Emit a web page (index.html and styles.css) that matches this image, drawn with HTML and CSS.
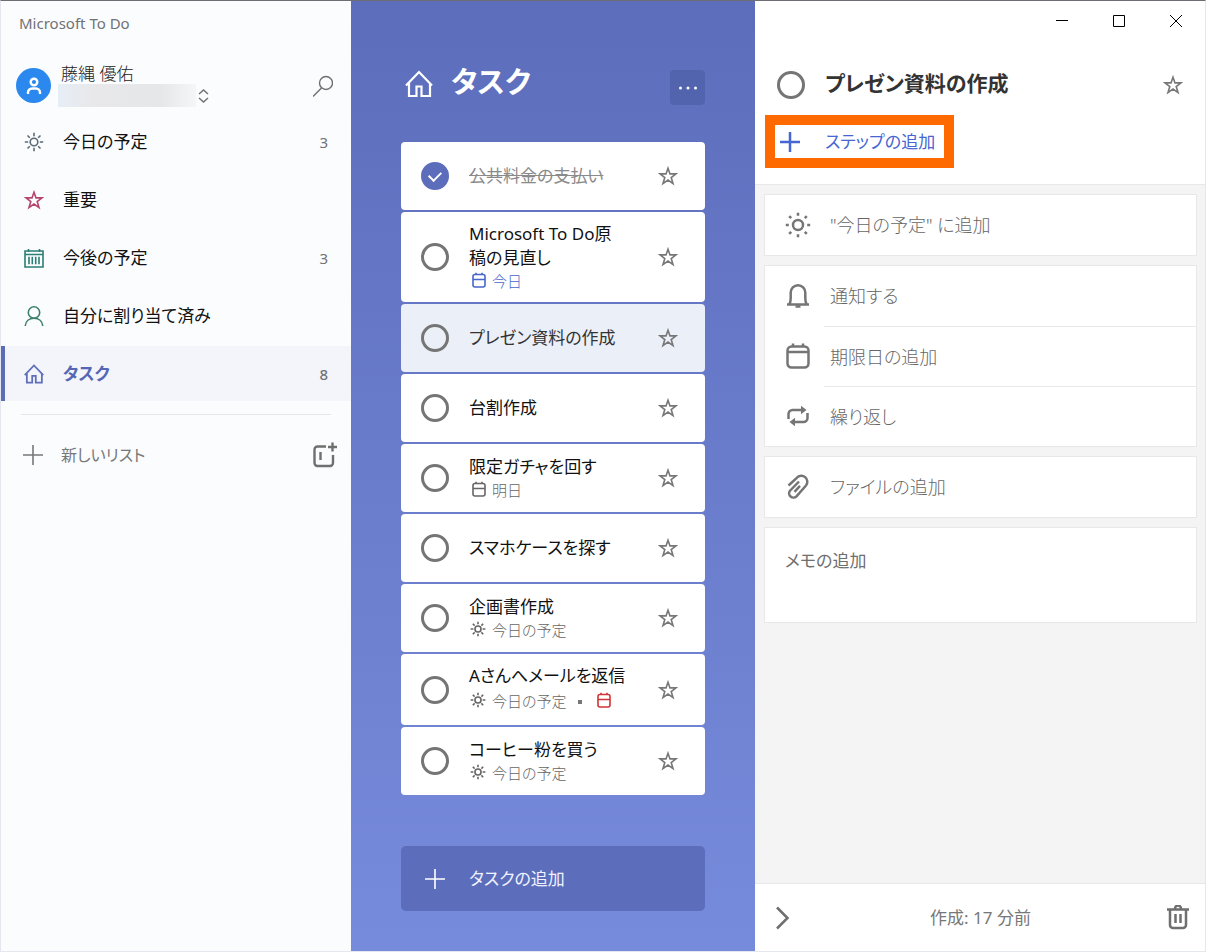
FILE: index.html
```html
<!DOCTYPE html>
<html lang="ja">
<head>
  <meta charset="UTF-8">
  <meta name="viewport" content="width=device-width, initial-scale=1">
  <title>Microsoft To Do</title>
  <link rel="stylesheet" href="styles.css">
</head>
<body>

  <!-- アイコン -->
  <svg class="sprite" aria-hidden="true">
    <symbol id="i-star" viewBox="0 0 20 20"><path d="M10 2.2l2 5.7h6l-4.8 3.7 1.8 6-5-3.600-5 3.600 1.800-6-4.800-3.700h6z"/></symbol>
    <symbol id="i-sun" viewBox="0 0 20 20"><circle cx="10" cy="10" r="3.8"/><path d="M10 .8v3.400M10 15.800v3.400M.8 10h3.400M15.800 10h3.400M3.500 3.500l2.300 2.300M14.200 14.200l2.300 2.300M3.500 16.500l2.300-2.300M14.200 5.800l2.300-2.300"/></symbol>
    <symbol id="i-sun-bold" viewBox="0 0 26 26"><circle cx="13" cy="13" r="5"/><path d="M13 .8v3M13 22.2v3M.8 13h3M22.2 13h3M4.2 4.2l2 2M19.8 19.8l2 2M4.2 21.8l2-2M19.8 6.2l2-2"/></symbol>
    <symbol id="i-home" viewBox="0 0 28 28"><path d="M1 15.5L14 2l13 13.5M4 12.8V26h7.5v-9.5h5V26H25V12.8"/></symbol>
    <symbol id="i-month" viewBox="0 0 20 20"><path d="M1 3h18v16H1zM1 6.5h18M4.5 1v3M15.5 1v3M5 8.8v7.4M8.3 8.8v7.4M11.7 8.8v7.4M15 8.8v7.4"/></symbol>
    <symbol id="i-user" viewBox="0 0 20 20"><circle cx="10" cy="6.5" r="5.7"/><path d="M1.2 20c.4-4.800 4-7.800 8.800-7.800s8.400 3 8.800 7.800"/></symbol>
    <symbol id="i-plus" viewBox="0 0 20 20"><path d="M10 0v20M0 10h20"/></symbol>
    <symbol id="i-date" viewBox="0 0 14 16"><rect x="1" y="2.5" width="12" height="12.5" rx="2"/><path d="M1 7.5h12M4 .8v2M10 .8v2"/></symbol>
    <symbol id="i-calendar" viewBox="0 0 24 26"><rect x="1.5" y="3.5" width="21" height="21" rx="4"/><path d="M1.5 9h21M7 .5v3M17 .5v3"/></symbol>
    <symbol id="i-bell" viewBox="0 0 24 26"><path d="M1 21.500h22M3.500 21c1-2 1.200-3.500 1.200-6V9.500a7.300 7.300 0 0 1 14.600 0V15c0 2.500.2 4 1.200 6"/><path d="M9.500 23.500h5"/></symbol>
    <symbol id="i-repeat" viewBox="0 0 22 22"><path d="M1.500 14V9a4 4 0 0 1 4-4H17M20.500 8v5a4 4 0 0 1-4 4H5"/><path class="solid" d="M14 .8L19.500 5 14 9.200zM8 12.800L2.500 17 8 21.200z"/></symbol>
    <symbol id="i-clip" viewBox="0 0 24 26"><path d="M2.500 11.500L10.800 3.800a6 6 0 0 1 9.200 7.700L10.500 22.300a4.300 4.300 0 0 1-6.500-5.600L13 7.500"/><path d="M8.500 17.800l5.500-6"/></symbol>
  </svg>

  <div class="window">

    <nav class="sidebar" aria-label="リスト">
      <div class="app-name">Microsoft To Do</div>

      <div class="profile">
        <span class="avatar">
          <svg width="16" height="18" viewBox="0 0 16 18"><circle cx="8" cy="5" r="3.3"/><path d="M2 17v-1.500a4 4 0 0 1 4-4h4a4 4 0 0 1 4 4V17"/></svg>
        </span>
        <div class="account">
          <div class="account-name">藤縄 優佑</div>
          <div class="account-row">
            <span class="account-mail"></span>
            <button class="icon-btn" aria-label="アカウントの管理">
              <svg width="11" height="14" viewBox="0 0 11 14"><path d="M1 5l4.500-4L10 5M1 9l4.500 4L10 9"/></svg>
            </button>
          </div>
        </div>
        <button class="icon-btn search" aria-label="検索">
          <svg width="20" height="22" viewBox="0 0 20 22"><circle cx="13" cy="8" r="6.5"/><path d="M8.500 13L0 21.500"/></svg>
        </button>
      </div>

      <ul class="lists">
        <li><a class="list" href="#"><svg class="ico c-slate"><use href="#i-sun"/></svg><span class="list-name">今日の予定</span><span class="count">3</span></a></li>
        <li><a class="list" href="#"><svg class="ico c-rose"><use href="#i-star"/></svg><span class="list-name">重要</span></a></li>
        <li><a class="list" href="#"><svg class="ico c-teal"><use href="#i-month"/></svg><span class="list-name">今後の予定</span><span class="count">3</span></a></li>
        <li><a class="list" href="#"><svg class="ico c-green"><use href="#i-user"/></svg><span class="list-name">自分に割り当て済み</span></a></li>
        <li><a class="list active" href="#" aria-current="page"><svg class="ico c-blue home"><use href="#i-home"/></svg><span class="list-name">タスク</span><span class="count">8</span></a></li>
      </ul>

      <div class="new-list">
        <button class="new-list-btn"><svg class="ico"><use href="#i-plus"/></svg>新しいリスト</button>
        <button class="icon-btn group" aria-label="新しいグループ">
          <svg width="26" height="26" viewBox="0 0 26 26"><path d="M14 4.500H5.500a3 3 0 0 0-3 3V21a3 3 0 0 0 3 3H18a3 3 0 0 0 3-3v-8M8.500 10v8M16 5h9M20.500 .5v9"/></svg>
        </button>
      </div>
    </nav>

    <main class="board">
      <header class="board-head">
        <svg class="board-icon"><use href="#i-home"/></svg>
        <h1>タスク</h1>
        <button class="more" aria-label="リストのオプション">
          <svg width="20" height="4" viewBox="0 0 20 4"><circle cx="2.5" cy="2" r="1.5"/><circle cx="10" cy="2" r="1.5"/><circle cx="17.5" cy="2" r="1.5"/></svg>
        </button>
      </header>

      <ul class="tasks">
        <li class="task done">
          <input type="checkbox" class="check" id="t1" checked>
          <div class="task-body"><label for="t1">公共料金の支払い</label></div>
          <button class="star" aria-label="重要としてマーク"><svg class="ico"><use href="#i-star"/></svg></button>
        </li>
        <li class="task">
          <input type="checkbox" class="check" id="t2">
          <div class="task-body">
            <label for="t2">Microsoft To Do原稿の見直し</label>
            <div class="meta today"><svg class="date"><use href="#i-date"/></svg>今日</div>
          </div>
          <button class="star" aria-label="重要としてマーク"><svg class="ico"><use href="#i-star"/></svg></button>
        </li>
        <li class="task selected">
          <input type="checkbox" class="check" id="t3">
          <div class="task-body"><label for="t3">プレゼン資料の作成</label></div>
          <button class="star" aria-label="重要としてマーク"><svg class="ico"><use href="#i-star"/></svg></button>
        </li>
        <li class="task">
          <input type="checkbox" class="check" id="t4">
          <div class="task-body"><label for="t4">台割作成</label></div>
          <button class="star" aria-label="重要としてマーク"><svg class="ico"><use href="#i-star"/></svg></button>
        </li>
        <li class="task">
          <input type="checkbox" class="check" id="t5">
          <div class="task-body">
            <label for="t5">限定ガチャを回す</label>
            <div class="meta"><svg class="date"><use href="#i-date"/></svg>明日</div>
          </div>
          <button class="star" aria-label="重要としてマーク"><svg class="ico"><use href="#i-star"/></svg></button>
        </li>
        <li class="task">
          <input type="checkbox" class="check" id="t6">
          <div class="task-body"><label for="t6">スマホケースを探す</label></div>
          <button class="star" aria-label="重要としてマーク"><svg class="ico"><use href="#i-star"/></svg></button>
        </li>
        <li class="task">
          <input type="checkbox" class="check" id="t7">
          <div class="task-body">
            <label for="t7">企画書作成</label>
            <div class="meta"><svg class="sun"><use href="#i-sun"/></svg>今日の予定</div>
          </div>
          <button class="star" aria-label="重要としてマーク"><svg class="ico"><use href="#i-star"/></svg></button>
        </li>
        <li class="task">
          <input type="checkbox" class="check" id="t8">
          <div class="task-body">
            <label for="t8">Aさんへメールを返信</label>
            <div class="meta tall"><svg class="sun"><use href="#i-sun"/></svg>今日の予定<span class="dot"></span><svg class="date overdue"><use href="#i-date"/></svg></div>
          </div>
          <button class="star" aria-label="重要としてマーク"><svg class="ico"><use href="#i-star"/></svg></button>
        </li>
        <li class="task">
          <input type="checkbox" class="check" id="t9">
          <div class="task-body">
            <label for="t9">コーヒー粉を買う</label>
            <div class="meta"><svg class="sun"><use href="#i-sun"/></svg>今日の予定</div>
          </div>
          <button class="star" aria-label="重要としてマーク"><svg class="ico"><use href="#i-star"/></svg></button>
        </li>
      </ul>

      <label class="add-task">
        <svg class="ico"><use href="#i-plus"/></svg>
        <input type="text" placeholder="タスクの追加" aria-label="タスクの追加">
      </label>
    </main>

    <aside class="detail">
      <div class="detail-top">
        <div class="caption">
          <button aria-label="最小化"><svg width="12" height="12" viewBox="0 0 12 12"><path d="M0 5.500h12"/></svg></button>
          <button aria-label="最大化"><svg width="12" height="12" viewBox="0 0 12 12"><path d="M.5 .5h11v11H.5z"/></svg></button>
          <button aria-label="閉じる"><svg width="12" height="12" viewBox="0 0 12 12"><path d="M0 0l12 12M12 0L0 12"/></svg></button>
        </div>
        <div class="detail-head">
          <input type="checkbox" class="check" id="current">
          <h2><label for="current">プレゼン資料の作成</label></h2>
          <button class="star" aria-label="重要としてマーク"><svg class="ico"><use href="#i-star"/></svg></button>
        </div>
        <button class="add-step"><svg class="ico"><use href="#i-plus"/></svg>ステップの追加</button>
      </div>

      <div class="cards">
        <div class="card">
          <button class="option"><svg class="opt-ico"><use href="#i-sun-bold"/></svg><span>"今日の予定" に追加</span></button>
        </div>
        <div class="card">
          <button class="option"><svg class="opt-ico"><use href="#i-bell"/></svg><span>通知する</span></button>
          <button class="option"><svg class="opt-ico"><use href="#i-calendar"/></svg><span>期限日の追加</span></button>
          <button class="option"><svg class="opt-ico small"><use href="#i-repeat"/></svg><span>繰り返し</span></button>
        </div>
        <div class="card">
          <button class="option"><svg class="opt-ico"><use href="#i-clip"/></svg><span>ファイルの追加</span></button>
        </div>
        <textarea class="card memo" placeholder="メモの追加" aria-label="メモの追加"></textarea>
      </div>

      <footer class="detail-foot">
        <button class="icon-btn" aria-label="詳細を閉じる">
          <svg width="24" height="24" viewBox="0 0 24 24"><path d="M6 1.500l10.500 10.500L6 22.500"/></svg>
        </button>
        <span>作成: 17 分前</span>
        <button class="icon-btn" aria-label="タスクの削除">
          <svg width="24" height="26" viewBox="0 0 24 26"><path d="M1 4.500h22M9 3.500a3 3 0 0 1 6 0M4 4.500V20a3 3 0 0 0 3 3h10a3 3 0 0 0 3-3V4.500M9.500 9v9M14.500 9v9"/></svg>
        </button>
      </footer>
    </aside>

  </div>
</body>
</html>
```

FILE: styles.css
```css
* {
  box-sizing: border-box;
}

body {
  margin: 0;
  font-family: "Noto Sans", "Noto Sans CJK JP", sans-serif;
  font-feature-settings: "palt";
  font-size: 17px;
  line-height: 24px;
  color: #111;
}

h1, h2, ul {
  margin: 0;
  padding: 0;
}

ul {
  list-style: none;
}

a {
  color: inherit;
  text-decoration: none;
}

button, input, textarea {
  font: inherit;
  font-feature-settings: inherit;
  color: inherit;
  margin: 0;
  padding: 0;
  border: none;
  background: none;
}

button {
  cursor: pointer;
}

svg {
  display: block;
  flex: none;
  fill: none;
  stroke: currentColor;
}

.solid {
  fill: currentColor;
  stroke: none;
}

.sprite {
  position: absolute;
  width: 0;
  height: 0;
}

.ico {
  width: 20px;
  height: 20px;
  stroke-width: 1.6;
}

.icon-btn {
  flex: none;
  color: #6f6f6f;
}

.window {
  display: flex;
  min-height: 100vh;
  border: 1px solid #e4e7ee;
  border-top-color: #6d6e74;
}

/* ---- サイドバー ---- */
.sidebar {
  flex: 0 0 350px;
  background: #fbfcfe;
}

.app-name {
  padding: 10px 18px 0;
  font-size: 15px;
  color: #707275;
}

.profile {
  display: flex;
  align-items: center;
  height: 79px;
  padding: 22px 16px 0 15px;
}

.avatar {
  display: flex;
  align-items: center;
  justify-content: center;
  width: 35px;
  height: 35px;
  border-radius: 50%;
  background: #2b88ee;
  color: #fff;
}

.avatar svg {
  stroke-width: 2.4;
}

.account {
  flex: 1;
  margin-left: 7px;
}

.account-name {
  padding: 0 3px;
  line-height: 20px;
  font-weight: 300;
  color: #222;
}

.account-row {
  display: flex;
  align-items: center;
  gap: 2px;
}

.account-row svg {
  stroke-width: 1.4;
}

.account-mail {
  width: 138px;
  height: 23px;
  background: linear-gradient(90deg, #e6eef6, #e8e8ea 25%, #e6e7e9 75%, #f5f6f8);
}

.search {
  margin-right: 2px;
}

.search svg {
  stroke-width: 1.4;
}

.list {
  display: flex;
  align-items: center;
  height: 55px;
  margin-bottom: 3px;
  padding: 0 23px 0 19px;
  border-left: 4px solid transparent;
}

.list-name {
  flex: 1;
  padding-left: 19px;
}

.count {
  font-size: 15px;
  color: #707275;
}

.active {
  border-left-color: #5c6db8;
  background: #f3f5fa;
}

.active .list-name {
  font-weight: 700;
  color: #5566b5;
}

.active .count {
  font-weight: 500;
}

.home {
  stroke-width: 2.5;
}

.c-slate { color: #5c6b75; }
.c-rose { color: #b8446c; }
.c-teal { color: #2b7d75; }
.c-green { color: #3c8068; }
.c-blue { color: #5f6fbc; }

.new-list {
  display: flex;
  align-items: center;
  justify-content: space-between;
  margin: 13px 20px 0;
  padding-top: 27px;
  border-top: 1px solid #e3e6eb;
  font-size: 16px;
  color: #777;
}

.new-list-btn {
  display: flex;
  align-items: center;
  gap: 18px;
  padding-left: 2px;
}

.group {
  margin-right: -7px;
}

.group svg {
  stroke-width: 2.4;
}

/* ---- タスク一覧 ---- */
.board {
  flex: 1;
  display: flex;
  flex-direction: column;
  min-width: 300px;
  padding: 69px 50px 40px;
  background: linear-gradient(#5c6dbb, #778bdc);
}

.board-head {
  display: flex;
  height: 72px;
  color: #fff;
}

.board-icon {
  width: 28px;
  height: 28px;
  margin-left: 4px;
  stroke-width: 2.2;
}

.board-head h1 {
  flex: 1;
  padding-left: 18px;
  font-size: 29px;
  line-height: 24px;
}

.more {
  display: flex;
  align-items: center;
  justify-content: center;
  width: 35px;
  height: 35px;
  border-radius: 4px;
  background: #5364ae;
}

.more svg {
  fill: #fff;
  stroke: none;
}

.tasks {
  flex: 1;
}

.task {
  display: flex;
  align-items: center;
  min-height: 68px;
  margin-bottom: 2px;
  padding: 10px 13px 10px 20px;
  border-radius: 4px;
  background: #fff;
}

.task-body {
  flex: 1;
  padding: 0 17px 0 20px;
}

.selected {
  background: #ebeff7;
}

.selected label {
  color: #333;
}

.done label {
  color: #8a8a8a;
  text-decoration: line-through;
}

.check {
  appearance: none;
  display: flex;
  align-items: center;
  justify-content: center;
  flex: none;
  width: 28px;
  height: 28px;
  border: 3px solid #757575;
  border-radius: 50%;
}

.check:checked {
  border-color: #5c6dbb;
  background: #5c6dbb;
}

.check:checked::after {
  content: "";
  width: 6px;
  height: 10px;
  margin-bottom: 3px;
  border: solid #fff;
  border-width: 0 2px 2px 0;
  transform: rotate(45deg);
}

.star {
  display: flex;
  justify-content: center;
  width: 48px;
  color: #777;
}

.meta {
  display: flex;
  align-items: center;
  font-size: 15px;
  line-height: 22px;
  font-weight: 300;
  color: #666;
}

.tall {
  line-height: 27px;
}

.today {
  color: #4666cc;
}

.date {
  width: 14px;
  height: 16px;
  margin: 0 6px 3px 3px;
  stroke-width: 1.6;
}

.sun {
  width: 16px;
  height: 16px;
  margin: 0 6px 3px 1px;
  stroke-width: 2;
}

.dot {
  width: 4px;
  height: 4px;
  margin: 0 12px;
  background: #777;
}

.overdue {
  color: #d13438;
}

.add-task {
  display: flex;
  align-items: center;
  height: 65px;
  padding: 0 24px;
  border-radius: 5px;
  background: #5c6dbb;
  color: #fff;
}

.add-task input {
  flex: 1;
  min-width: 0;
  padding-left: 24px;
}

.add-task input::placeholder {
  color: #f0f3ff;
}

/* ---- 詳細 ---- */
.detail {
  flex: 0 0 450px;
  display: flex;
  flex-direction: column;
  background: #f4f4f4;
}

.detail-top {
  height: 184px;
  border-bottom: 1px solid #e8e8e8;
  background: #fff;
}

.caption {
  display: flex;
  justify-content: flex-end;
  padding-right: 1px;
}

.caption button {
  display: flex;
  align-items: center;
  justify-content: center;
  width: 57px;
  height: 40px;
}

.caption svg {
  stroke: #000;
}

.detail-head {
  display: flex;
  align-items: center;
  height: 74px;
  padding: 14px 8px 0 22px;
}

.detail-head h2 {
  flex: 1;
  padding: 0 0 4px 20px;
  font-size: 21px;
  color: #333;
}

/* 操作箇所の強調枠 */
.add-step {
  display: flex;
  align-items: center;
  gap: 25px;
  height: 53px;
  margin-left: 10px;
  padding: 0 9px 0 5px;
  border: 10px solid #ff6a00;
  color: #4666d4;
}

.add-step .ico {
  stroke-width: 2.5;
}

.cards {
  flex: 1;
  display: flex;
  flex-direction: column;
  gap: 9px;
  padding: 9px 8px 9px 9px;
}

.card {
  border: 1px solid #e8e8e8;
  background: #fff;
}

.option {
  display: flex;
  align-items: center;
  width: 100%;
  height: 60px;
  padding-left: 20px;
  font-size: 18px;
  font-weight: 300;
  text-align: left;
  color: #666;
}

.option span {
  flex: 1;
  margin-left: 13px;
  padding: 18px 6px;
}

.option + .option span {
  border-top: 1px solid #e8e8e8;
}

.opt-ico {
  width: 26px;
  height: 26px;
  stroke-width: 2.5;
  color: #757575;
}

.small {
  height: 22px;
}

.memo {
  height: 96px;
  padding: 21px 20px;
  resize: none;
}

.memo::placeholder {
  color: #6f6f6f;
}

.detail-foot {
  display: flex;
  align-items: center;
  justify-content: space-between;
  height: 68px;
  padding: 0 15px 0 16px;
  border-top: 1px solid #e8e8e8;
  background: #fff;
  color: #777;
}

.detail-foot svg {
  stroke-width: 2.5;
}
```
